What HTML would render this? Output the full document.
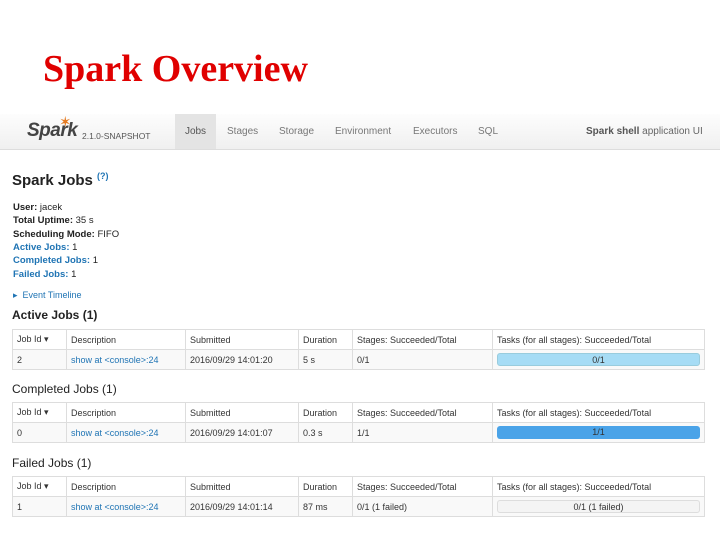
<!DOCTYPE html>
<html><head><meta charset="utf-8"><style>
*{margin:0;padding:0;box-sizing:border-box}
body{width:720px;height:540px;background:#fff;position:relative;overflow:hidden;font-family:"Liberation Sans",sans-serif;color:#222}
.a{position:absolute;white-space:nowrap}
.title{left:43px;top:47px;font-family:"Liberation Serif",serif;font-weight:bold;font-size:38px;color:#e00000}
.nav{left:0;top:114px;width:720px;height:36px;background:linear-gradient(#fdfdfd,#f0f0f0);border-bottom:1px solid #ddd}
.tab{top:0;height:35px;line-height:35px;font-size:10px;color:#777}
.info{font-size:9.5px;left:13px}
.info b{font-weight:bold}
.blue{color:#1f74b4}
h3{position:absolute;left:12px;font-size:12px;font-weight:normal;color:#222}
table{position:absolute;left:12px;width:693px;border-collapse:collapse;font-size:9px;border:1px solid #ddd}
td{height:20px;border:1px solid #ddd;padding-left:4px;white-space:nowrap}
tr.h td{color:#333}
tr.r td{background:#f9f9f9;color:#333}
tr.r td.blue{color:#1f74b4}
.bar{height:13px;border-radius:3px;text-align:center;line-height:13px;margin-right:4px}
</style></head><body>
<div class="a title">Spark Overview</div>
<div class="a nav">
 <div class="a" style="left:27px;top:6px;font-size:19px;font-style:italic;font-weight:bold;color:#444;letter-spacing:-0.5px">Spark</div>
 <div class="a" style="left:59px;top:-1px;font-size:15px;color:#e57b22">✶</div>
 <div class="a" style="left:82px;top:17px;font-size:8.5px;color:#555">2.1.0-SNAPSHOT</div>
 <div class="a tab" style="left:175px;width:41px;background:#e4e4e4;text-align:center;color:#555">Jobs</div>
 <div class="a tab" style="left:227px">Stages</div>
 <div class="a tab" style="left:279px">Storage</div>
 <div class="a tab" style="left:335px">Environment</div>
 <div class="a tab" style="left:413px">Executors</div>
 <div class="a tab" style="left:478px">SQL</div>
 <div class="a tab" style="left:586px;color:#666"><b style="color:#555">Spark shell</b> application UI</div>
</div>
<div class="a" style="left:12px;top:171px;font-size:15px;font-weight:bold;color:#222">Spark Jobs <sup style="font-size:9px;color:#1f74b4">(?)</sup></div>
<div class="a info" style="top:202px"><b>User:</b> jacek</div>
<div class="a info" style="top:215px"><b>Total Uptime:</b> 35 s</div>
<div class="a info" style="top:229px"><b>Scheduling Mode:</b> FIFO</div>
<div class="a info" style="top:242px"><b class="blue">Active Jobs:</b> 1</div>
<div class="a info" style="top:255px"><b class="blue">Completed Jobs:</b> 1</div>
<div class="a info" style="top:269px"><b class="blue">Failed Jobs:</b> 1</div>
<div class="a info blue" style="top:290px;font-size:9px">▸ &nbsp;Event Timeline</div>
<h3 style="top:308px;font-weight:bold">Active Jobs (1)</h3>
<table style="top:329px"><tr class="h"><td style="width:54px">Job Id ▾</td><td style="width:119px">Description</td><td style="width:113px">Submitted</td><td style="width:54px">Duration</td><td style="width:140px">Stages: Succeeded/Total</td><td>Tasks (for all stages): Succeeded/Total</td></tr>
<tr class="r"><td>2</td><td class="blue">show at &lt;console&gt;:24</td><td>2016/09/29 14:01:20</td><td>5 s</td><td>0/1</td><td><div class="bar" style="background:#a6dcf5;border:1px solid #9cd">0/1</div></td></tr></table>
<h3 style="top:382px">Completed Jobs (1)</h3>
<table style="top:402px"><tr class="h"><td style="width:54px">Job Id ▾</td><td style="width:119px">Description</td><td style="width:113px">Submitted</td><td style="width:54px">Duration</td><td style="width:140px">Stages: Succeeded/Total</td><td>Tasks (for all stages): Succeeded/Total</td></tr>
<tr class="r"><td>0</td><td class="blue">show at &lt;console&gt;:24</td><td>2016/09/29 14:01:07</td><td>0.3 s</td><td>1/1</td><td><div class="bar" style="background:#4aa3e8">1/1</div></td></tr></table>
<h3 style="top:456px">Failed Jobs (1)</h3>
<table style="top:476px"><tr class="h"><td style="width:54px">Job Id ▾</td><td style="width:119px">Description</td><td style="width:113px">Submitted</td><td style="width:54px">Duration</td><td style="width:140px">Stages: Succeeded/Total</td><td>Tasks (for all stages): Succeeded/Total</td></tr>
<tr class="r"><td>1</td><td class="blue">show at &lt;console&gt;:24</td><td>2016/09/29 14:01:14</td><td>87 ms</td><td>0/1 (1 failed)</td><td><div class="bar" style="background:#f4f4f4;border:1px solid #ddd">0/1 (1 failed)</div></td></tr></table>
</body></html>
